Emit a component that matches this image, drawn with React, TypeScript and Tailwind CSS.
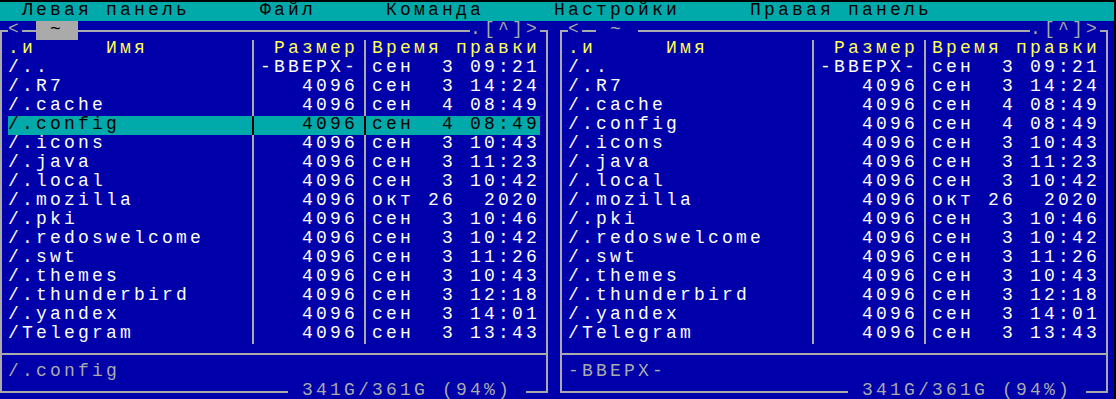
import React from 'react';

const files: [string, string, string][] = [
  ['/..', '-ВВЕРХ-', 'сен  3 09:21'],
  ['/.R7', '4096', 'сен  3 14:24'],
  ['/.cache', '4096', 'сен  4 08:49'],
  ['/.config', '4096', 'сен  4 08:49'],
  ['/.icons', '4096', 'сен  3 10:43'],
  ['/.java', '4096', 'сен  3 11:23'],
  ['/.local', '4096', 'сен  3 10:42'],
  ['/.mozilla', '4096', 'окт 26  2020'],
  ['/.pki', '4096', 'сен  3 10:46'],
  ['/.redoswelcome', '4096', 'сен  3 10:42'],
  ['/.swt', '4096', 'сен  3 11:26'],
  ['/.themes', '4096', 'сен  3 10:43'],
  ['/.thunderbird', '4096', 'сен  3 12:18'],
  ['/.yandex', '4096', 'сен  3 14:01'],
  ['/Telegram', '4096', 'сен  3 13:43'],
];

function HLine({ className }: { className: string }) {
  return (
    <div className={`h-[19px] pt-[9px] ${className}`}>
      <div className="h-[2px] bg-[#aaaaaa]" />
    </div>
  );
}

function VCell() {
  return (
    <div className="flex h-[19px] w-[14px] justify-center">
      <div className="h-full w-[2px] bg-[#aaaaaa]" />
    </div>
  );
}

function Sep({ sel }: { sel: boolean }) {
  return (
    <div className="flex h-[19px] w-[14px] justify-center">
      <div className={sel ? 'h-full w-[2px] bg-black' : 'h-full w-[2px] bg-[#aaaaaa]'} />
    </div>
  );
}

function FileRow({
  name,
  size,
  time,
  sel = false,
  head = false,
}: {
  name: string;
  size: string;
  time: string;
  sel?: boolean;
  head?: boolean;
}) {
  const txt = head ? 'text-[#ffff55]' : sel ? 'text-black' : 'text-white';
  return (
    <div className={sel ? 'flex h-[19px] w-[532px] bg-[#00aaaa]' : 'flex h-[19px] w-[532px]'}>
      <div className={`w-[238px] whitespace-pre ${txt}`}>{name}</div>
      <Sep sel={sel} />
      <div className={`w-[98px] whitespace-pre text-right ${txt}`}>{size}</div>
      <Sep sel={sel} />
      <div className={`w-[168px] whitespace-pre ${txt}`}>{time}</div>
    </div>
  );
}

function FramedRow({ children }: { children: React.ReactNode }) {
  return (
    <div className="flex h-[19px]">
      <VCell />
      {children}
      <VCell />
    </div>
  );
}

function Panel({ active }: { active: boolean }) {
  return (
    <div className="flex w-[560px] flex-col">
      {/* top border */}
      <div className="flex h-[19px]">
        <div className="w-[14px]">
          <div className="ml-[6px] mt-[9px] h-[10px] w-[8px] border-l-2 border-t-2 border-[#aaaaaa]" />
        </div>
        <div className="flex w-[532px]">
          <div className="w-[14px] whitespace-pre text-[#aaaaaa]">{'<'}</div>
          <HLine className="w-[14px]" />
          {active ? (
            <div className="h-[19px] w-[42px] whitespace-pre bg-[#aaaaaa] text-black">{' ~ '}</div>
          ) : (
            <div className="h-[19px] w-[42px] whitespace-pre text-[#aaaaaa]">{' ~ '}</div>
          )}
          <HLine className="w-[392px]" />
          <div className="w-[70px] whitespace-pre text-[#aaaaaa]">{'.[^]>'}</div>
        </div>
        <div className="w-[14px]">
          <div className="mt-[9px] h-[10px] w-[8px] border-r-2 border-t-2 border-[#aaaaaa]" />
        </div>
      </div>

      {/* header */}
      <FramedRow>
        <FileRow head name={'.и     Имя'} size="Размер" time="Время правки" />
      </FramedRow>

      {files.map(([n, s, t]) => (
        <FramedRow key={n}>
          <FileRow name={n} size={s} time={t} sel={active && n === '/.config'} />
        </FramedRow>
      ))}

      {/* separator */}
      <div className="flex h-[19px]">
        <div className="flex h-[19px] w-[14px]">
          <div className="ml-[6px] h-full w-[2px] bg-[#aaaaaa]" />
          <div className="mt-[9px] h-[2px] w-[6px] bg-[#aaaaaa]" />
        </div>
        <HLine className="w-[532px]" />
        <div className="flex h-[19px] w-[14px]">
          <div className="mt-[9px] h-[2px] w-[6px] bg-[#aaaaaa]" />
          <div className="h-full w-[2px] bg-[#aaaaaa]" />
        </div>
      </div>

      {/* mini status */}
      <FramedRow>
        <div className="w-[532px] whitespace-pre text-[#aaaaaa]">{active ? '/.config' : '-ВВЕРХ-'}</div>
      </FramedRow>

      {/* bottom border */}
      <div className="flex h-[19px]">
        <div className="w-[14px]">
          <div className="ml-[6px] h-[11px] w-[8px] border-b-2 border-l-2 border-[#aaaaaa]" />
        </div>
        <div className="flex w-[532px]">
          <HLine className="w-[280px]" />
          <div className="w-[238px] whitespace-pre text-[#aaaaaa]">{' 341G/361G (94%) '}</div>
          <HLine className="w-[14px]" />
        </div>
        <div className="w-[14px]">
          <div className="h-[11px] w-[8px] border-b-2 border-r-2 border-[#aaaaaa]" />
        </div>
      </div>
    </div>
  );
}

export default function App() {
  const menu = '  Левая панель     Файл     Команда     Настройки     Правая панель';
  return (
    <div className="h-[399px] w-[1116px] overflow-hidden bg-black">
      <div className="-ml-[6px] mt-[2px] w-[1120px] bg-[#0000aa] font-['Liberation_Mono',monospace] text-[18px] leading-[17px] tracking-[3.198px]">
        <div className="h-[19px] whitespace-pre bg-[#00aaaa] text-black">{menu}</div>
        <div className="flex">
          <Panel active />
          <Panel active={false} />
        </div>
      </div>
    </div>
  );
}
